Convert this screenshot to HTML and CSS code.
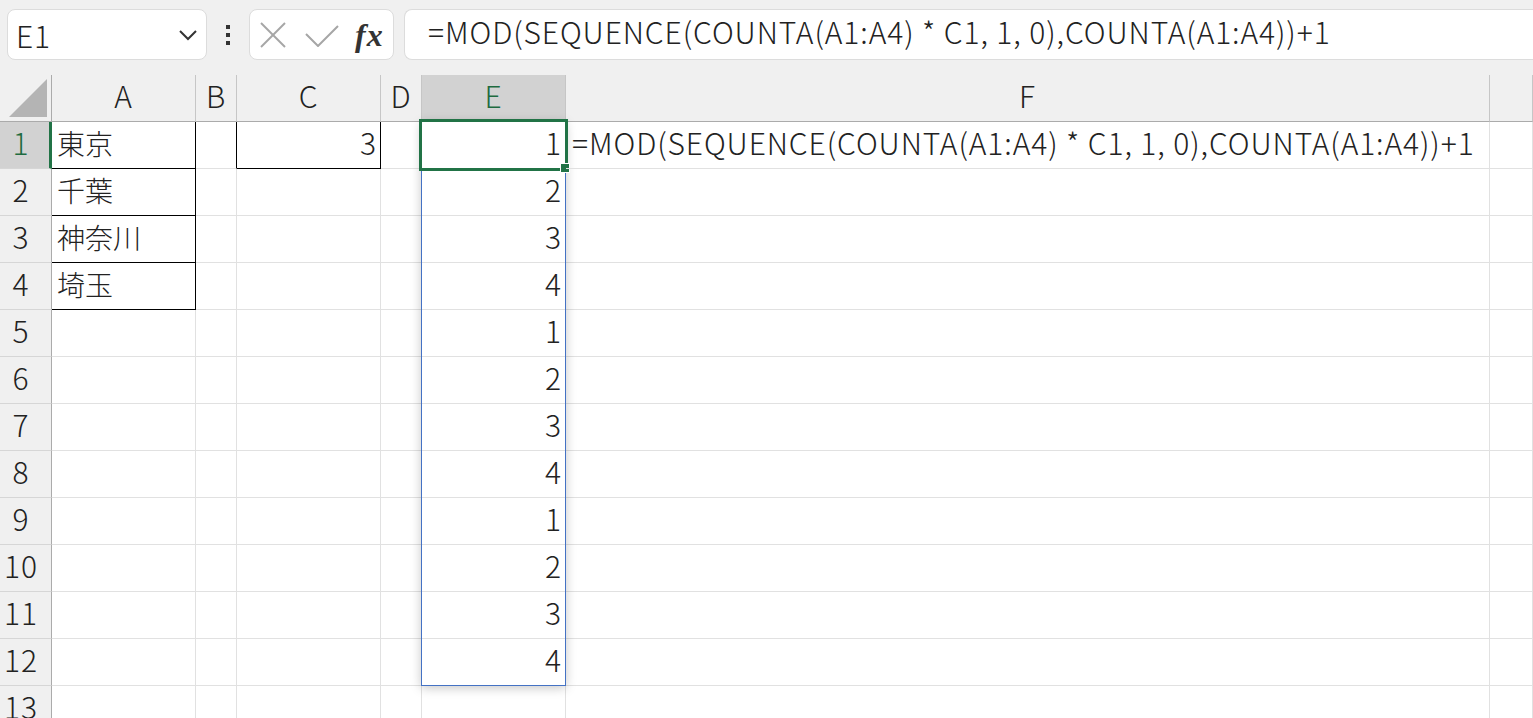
FILE: index.html
```html
<!DOCTYPE html>
<html lang="ja">
<head>
<meta charset="utf-8">
<title>Sheet</title>
<link rel="stylesheet" href="styles.css">
</head>
<body>
<div class="app">
  <div class="toolbar">
    <div class="namebox">
      <span class="name">E1</span>
      <svg class="chev" width="18" height="12" viewBox="0 0 18 12"><polyline points="1,2 9,10 17,2" fill="none" stroke="#333" stroke-width="2"/></svg>
    </div>
    <div class="dots"><span></span><span></span><span></span></div>
    <div class="fxbox">
      <svg class="xicon" width="26" height="26" viewBox="0 0 26 26"><line x1="1" y1="1" x2="25" y2="25" stroke="#a6a6a6" stroke-width="2"/><line x1="25" y1="1" x2="1" y2="25" stroke="#a6a6a6" stroke-width="2"/></svg>
      <svg class="check" width="34" height="22" viewBox="0 0 34 22"><polyline points="1,9 13,21 33,1" fill="none" stroke="#a6a6a6" stroke-width="2"/></svg>
      <span class="fx">fx</span>
    </div>
    <div class="formulabox">=MOD(SEQUENCE(COUNTA(A1:A4) * C1, 1, 0),COUNTA(A1:A4))+1</div>
  </div>
  <div class="sheet">
    <div class="grid">
      <div class="ch corner"><svg width="52" height="46" viewBox="0 0 52 46"><polygon points="9,42 47,42 47,4" fill="#b4b4b4"/></svg></div>
      <div class="ch">A</div><div class="ch">B</div><div class="ch">C</div><div class="ch">D</div><div class="ch sel">E</div><div class="ch">F</div><div class="ch"></div>

      <div class="rh sel">1</div><div class="c bA jp">東京</div><div class="c bL"></div><div class="c bC num">3</div><div class="c"></div><div class="c num">1</div><div class="c over">=MOD(SEQUENCE(COUNTA(A1:A4) * C1, 1, 0),COUNTA(A1:A4))+1</div><div class="c"></div>
      <div class="rh">2</div><div class="c bA jp">千葉</div><div class="c"></div><div class="c"></div><div class="c"></div><div class="c num">2</div><div class="c"></div><div class="c"></div>
      <div class="rh">3</div><div class="c bA jp">神奈川</div><div class="c"></div><div class="c"></div><div class="c"></div><div class="c num">3</div><div class="c"></div><div class="c"></div>
      <div class="rh">4</div><div class="c bA jp">埼玉</div><div class="c"></div><div class="c"></div><div class="c"></div><div class="c num">4</div><div class="c"></div><div class="c"></div>
      <div class="rh">5</div><div class="c"></div><div class="c"></div><div class="c"></div><div class="c"></div><div class="c num">1</div><div class="c"></div><div class="c"></div>
      <div class="rh">6</div><div class="c"></div><div class="c"></div><div class="c"></div><div class="c"></div><div class="c num">2</div><div class="c"></div><div class="c"></div>
      <div class="rh">7</div><div class="c"></div><div class="c"></div><div class="c"></div><div class="c"></div><div class="c num">3</div><div class="c"></div><div class="c"></div>
      <div class="rh">8</div><div class="c"></div><div class="c"></div><div class="c"></div><div class="c"></div><div class="c num">4</div><div class="c"></div><div class="c"></div>
      <div class="rh">9</div><div class="c"></div><div class="c"></div><div class="c"></div><div class="c"></div><div class="c num">1</div><div class="c"></div><div class="c"></div>
      <div class="rh">10</div><div class="c"></div><div class="c"></div><div class="c"></div><div class="c"></div><div class="c num">2</div><div class="c"></div><div class="c"></div>
      <div class="rh">11</div><div class="c"></div><div class="c"></div><div class="c"></div><div class="c"></div><div class="c num">3</div><div class="c"></div><div class="c"></div>
      <div class="rh">12</div><div class="c"></div><div class="c"></div><div class="c"></div><div class="c"></div><div class="c num">4</div><div class="c"></div><div class="c"></div>
      <div class="rh">13</div><div class="c"></div><div class="c"></div><div class="c"></div><div class="c"></div><div class="c"></div><div class="c"></div><div class="c"></div>
    </div>
    <div class="spill"></div>
    <div class="cursor"><span class="handle"></span></div>
  </div>
</div>
</body>
</html>
```
FILE: styles.css
```css
html, body {
  margin: 0;
  padding: 0;
  background: #f0f0f0;
  overflow: hidden;
}
.app {
  width: 1533px;
  height: 718px;
  overflow: hidden;
  font-family: "Noto Sans CJK JP", "Noto Sans", sans-serif;
  font-weight: 300;
  color: #222;
}
.toolbar {
  height: 75px;
  box-sizing: border-box;
  padding: 9px 0 0 7px;
  display: flex;
  align-items: flex-start;
}
.namebox {
  width: 200px;
  height: 51px;
  box-sizing: border-box;
  background: #fff;
  border: 1px solid #dcdcdc;
  border-radius: 8px;
  display: flex;
  align-items: center;
  justify-content: space-between;
  padding: 0 9px 0 8px;
}
.name {
  font-size: 30px;
  letter-spacing: 0.9px;
  line-height: 1;
  margin-top: 0;
}
.chev { display: block; }
.dots {
  width: 42px;
  height: 51px;
  display: flex;
  flex-direction: column;
  align-items: center;
  justify-content: center;
  gap: 4px;
}
.dots span {
  width: 4px;
  height: 4px;
  background: #333;
}
.fxbox {
  width: 145px;
  height: 51px;
  box-sizing: border-box;
  background: #fff;
  border: 1px solid #dcdcdc;
  border-radius: 8px;
  display: flex;
  align-items: center;
  padding: 0 0 0 10px;
}
.xicon { display: block; margin-right: 19px; }
.check { display: block; margin-right: 16px; margin-top: 2px; }
.fx {
  font-family: "Liberation Serif", "DejaVu Serif", serif;
  font-style: italic;
  font-weight: bold;
  font-size: 32px;
  color: #333;
  line-height: 1;
  letter-spacing: 1px;
}
.formulabox {
  margin-left: 10px;
  flex: 1;
  height: 51px;
  box-sizing: border-box;
  background: #fff;
  border: 1px solid #dcdcdc;
  border-right: none;
  border-radius: 8px 0 0 8px;
  padding-left: 23px;
  font-size: 30px;
  letter-spacing: 0.9px;
  line-height: 43px;
  white-space: nowrap;
}
.sheet {
  position: relative;
}
.grid {
  display: grid;
  grid-template-columns: 52px 144px 41px 144px 41px 144px 924px 1fr;
  grid-auto-rows: 47px;
  background: #fff;
}
.grid > div {
  box-sizing: border-box;
  font-size: 30px;
  letter-spacing: 0.9px;
  white-space: nowrap;
}
.ch {
  background: #f0f0f0;
  border-right: 1px solid #c6c6c6;
  border-bottom: 1px solid #ababab;
  text-align: center;
  line-height: 40px;
}
.ch.corner {
  border-right: 1px solid #ababab;
}
.ch.corner svg { display: block; }
.ch.sel {
  background: #d2d2d2;
  color: #1e6b40;
  border-bottom: 3px solid #217346;
}
.rh {
  background: #f0f0f0;
  border-right: 1px solid #ababab;
  border-bottom: 1px solid #d6d6d6;
  text-align: center;
  line-height: 41px;
  padding-right: 9px;
  letter-spacing: 0.4px;
}
.rh.sel {
  background: #d2d2d2;
  color: #1e6b40;
  border-right: 3px solid #217346;
  padding-right: 7px;
}
.c {
  border-right: 1px solid #e1e1e1;
  border-bottom: 1px solid #e1e1e1;
  line-height: 41px;
  padding: 0 5px;
}
.grid > .c.jp {
  font-size: 28px;
  letter-spacing: 0;
  line-height: 43px;
}
.grid > .c.num {
  text-align: right;
  letter-spacing: 0;
  padding-right: 4px;
}
.c.bA {
  border-right-color: #000;
  border-bottom-color: #000;
}
.c.bL { border-right-color: #000; }
.c.bC {
  border-right-color: #000;
  border-bottom-color: #000;
}
.c.over {
  overflow: visible;
  padding-left: 6px;
  position: relative;
  z-index: 3;
}
.spill {
  position: absolute;
  left: 421px;
  top: 46px;
  width: 145px;
  height: 565px;
  box-sizing: border-box;
  border: 1px solid #4472c4;
  box-shadow: 0 2px 10px rgba(0, 0, 0, 0.22);
  pointer-events: none;
  z-index: 1;
}
.cursor {
  position: absolute;
  left: 419px;
  top: 44px;
  width: 149px;
  height: 52px;
  box-sizing: border-box;
  border: 3px solid #217346;
  z-index: 2;
}
.handle {
  position: absolute;
  right: -4px;
  bottom: -4px;
  width: 8px;
  height: 8px;
  background: #217346;
  outline: 1px solid #fff;
}
```
